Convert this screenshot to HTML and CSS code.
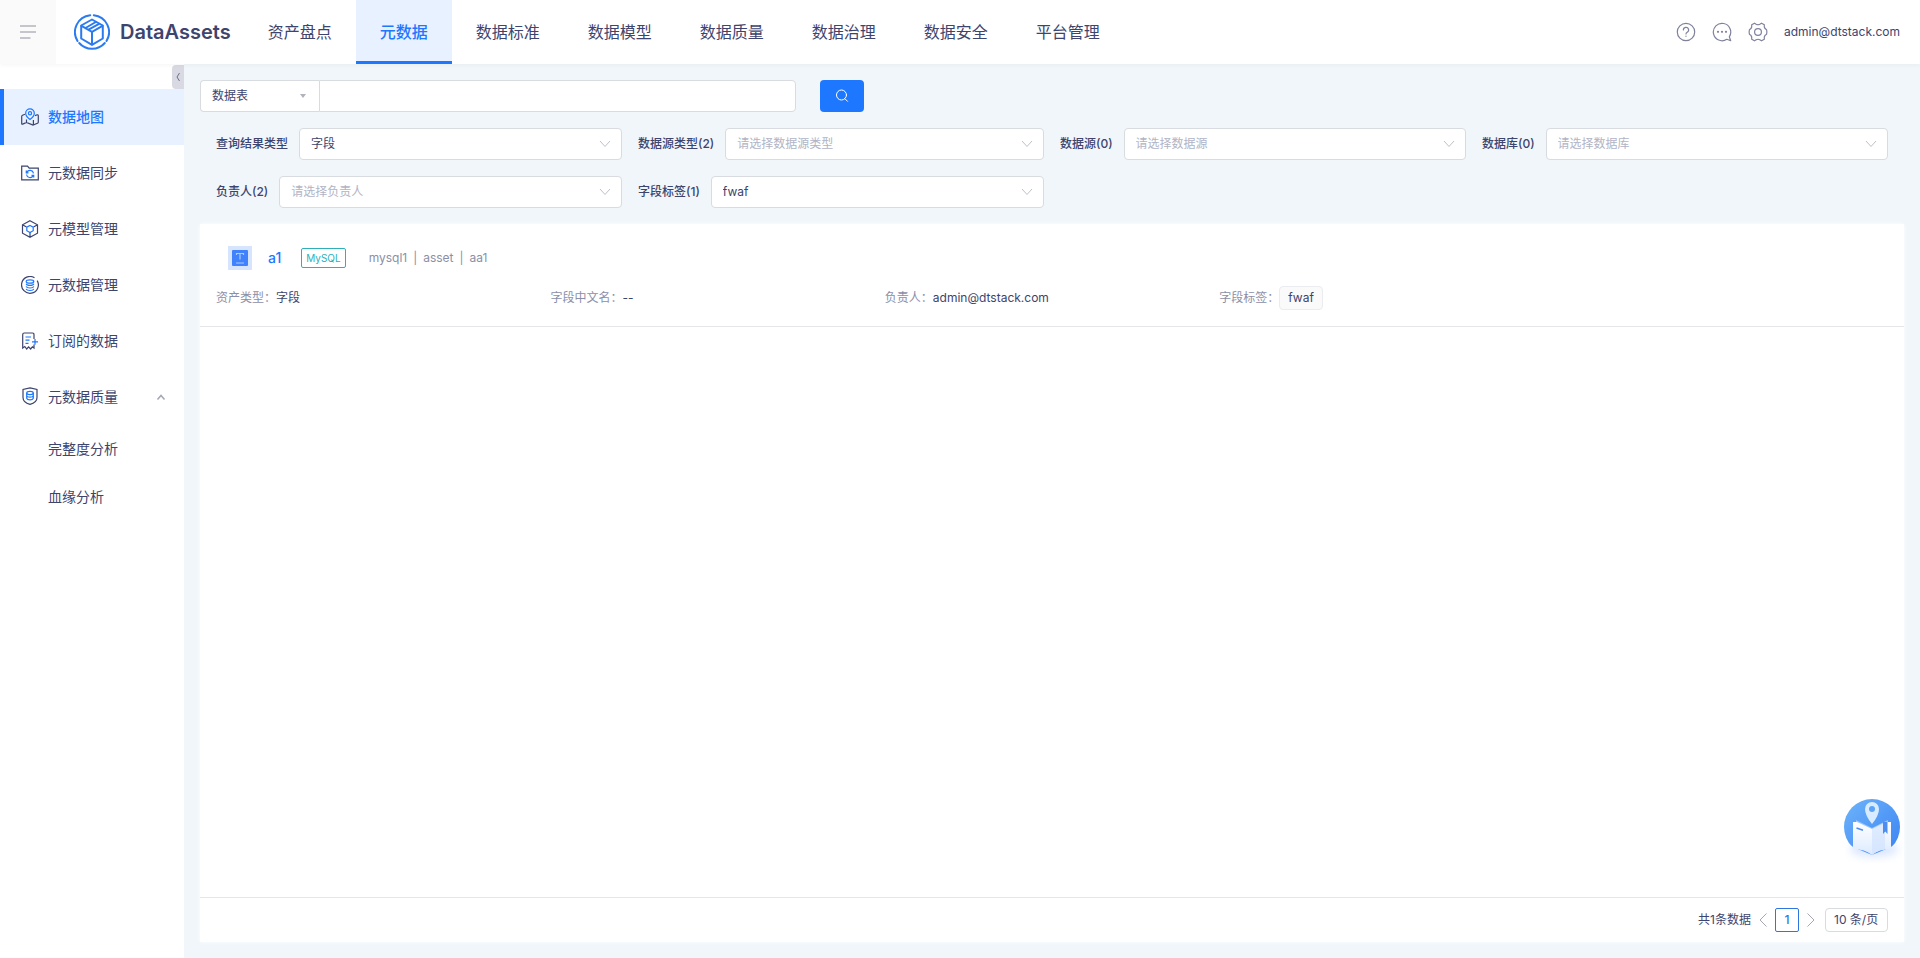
FILE: index.html
```html
<!DOCTYPE html>
<html lang="zh-CN">
<head>
  <meta charset="UTF-8" />
  <meta name="viewport" content="width=device-width, initial-scale=1.0"/>
  <title>DataAssets</title>
  <link rel="stylesheet" href="styles.css">
</head>
<body>

  <header class="header">
    <button class="menu-btn" aria-label="菜单">
      <svg width="16" height="14" viewBox="0 0 16 14" fill="none" stroke="#b4b4bc" stroke-width="1.5"><path d="M0 1h16M0 7h16M0 13h10.500"/></svg>
    </button>
    <a class="brand" href="#">
      <svg width="36" height="36" viewBox="0 0 36 36" fill="none" stroke="#2b7bf0" stroke-width="2" stroke-linecap="round" stroke-linejoin="round">
        <path d="M16.200 1.200A17 17 0 0 0 3.500 27"/>
        <path d="M19.800 1.200A17 17 0 0 1 32.500 27"/>
        <path d="M5.200 29A17 17 0 0 0 30.800 29"/>
        <path d="M18 5.500L28.800 11.500V24.500L18 30.800L7.200 24.500V11.500Z"/>
        <path d="M7.500 11.800L18 17.800L28.500 11.800M18 17.800V30.500M11.500 14L21.800 8M14.600 15.700L25 9.800"/>
      </svg>
      <span>DataAssets</span>
    </a>
    <nav class="nav">
      <a href="#">资产盘点</a>
      <a href="#" class="active">元数据</a>
      <a href="#">数据标准</a>
      <a href="#">数据模型</a>
      <a href="#">数据质量</a>
      <a href="#">数据治理</a>
      <a href="#">数据安全</a>
      <a href="#">平台管理</a>
    </nav>
    <div class="tools">
      <button aria-label="帮助">
        <svg width="20" height="20" viewBox="0 0 20 20" fill="none" stroke="#7f829c" stroke-width="1.200" stroke-linecap="round"><circle cx="10" cy="10" r="8.700"/><path d="M7.400 8A2.600 2.600 0 1 1 11.200 10.200Q10 10.800 10 12"/><path d="M10 14v.3"/></svg>
      </button>
      <button aria-label="消息">
        <svg width="20" height="20" viewBox="0 0 20 20" fill="none" stroke="#7f829c" stroke-width="1.200" stroke-linejoin="round"><path d="M17.300 14.800A8.700 8.700 0 1 0 14.800 17.300L18.700 18.700Z"/><g fill="#7f829c" stroke="none"><circle cx="6" cy="9.800" r="1.100"/><circle cx="10" cy="9.800" r="1.100"/><circle cx="14" cy="9.800" r="1.100"/></g></svg>
      </button>
      <button aria-label="设置">
        <svg width="20" height="20" viewBox="0 0 20 20" fill="none" stroke="#7f829c" stroke-width="1.200" stroke-linejoin="round"><path d="M6.500 1.200L8.200 2.300Q10 3.200 11.800 2.300L13.500 1.200L16.300 2.800V5Q16.700 6.800 18.600 7.800Q19.200 10 18.600 12.200Q16.700 13.200 16.300 15V17.200L13.500 18.800L11.800 17.700Q10 16.800 8.200 17.700L6.500 18.800L3.700 17.200V15Q3.300 13.200 1.400 12.200Q.8 10 1.400 7.800Q3.300 6.800 3.700 5V2.800Z"/><circle cx="10" cy="10" r="3.400"/></svg>
      </button>
      <a class="user" href="#">admin@dtstack.com</a>
    </div>
  </header>

  <div class="layout">
    <aside class="sidebar">
      <button class="collapse" aria-label="收起">
        <svg width="6" height="10" viewBox="0 0 6 10" fill="none" stroke="#6d7088"><path d="M4.500 1L2 5L4.500 9"/></svg>
      </button>
      <nav class="side-menu">
        <a href="#" class="active">
          <svg class="ico" viewBox="0 0 18 18"><path d="M4 6.200L1.500 7.200Q.7 7.600.7 8.500V15.500Q.7 16.600 1.700 16.100L5.500 14.400L12 17L16.500 15.300Q17.300 15 17.300 14V7.700Q17.300 6.500 16.200 6.800L14 7.600M5.500 11.500V14.400M12.400 12V16.800"/><path class="blue" d="M9 11.500Q4.700 8.300 4.700 5.200A4.300 4.300 0 0 1 13.300 5.200Q13.300 8.300 9 11.500Z"/><circle class="blue" cx="9" cy="5.200" r="1.600"/></svg>
          数据地图
        </a>
        <a href="#">
          <svg class="ico" viewBox="0 0 18 18"><path d="M.7 15.800V2.200H6.500L8.200 4.200H17.300V15.800Z"/><path class="blue" d="M5.800 8.200A3.600 3.600 0 0 1 12.500 9.300M5.500 10.500A3.600 3.600 0 0 0 12.100 11.900M5.300 6.500V8.800H7.500M12.700 13.500V11.400H10.500"/></svg>
          元数据同步
        </a>
        <a href="#">
          <svg class="ico" viewBox="0 0 18 18"><path d="M9 .8L16.500 4.800V13.200L9 17.300L1.500 13.200V4.800ZM1.500 4.800L5.500 7M16.500 4.800L12.500 7M9 12V17"/><path class="blue" d="M9 5.500L12.200 7.200V10.700L9 12.500L5.800 10.700V7.200Z"/></svg>
          元模型管理
        </a>
        <a href="#">
          <svg class="ico" viewBox="0 0 18 18"><path d="M13.500 1.800A8.400 8.400 0 1 0 16.200 4.600"/><g class="blue"><ellipse cx="9" cy="5.500" rx="3.800" ry="1.700"/><path d="M5.200 7.700Q5.800 9.400 9 9.400T12.800 7.700M5.200 10.400Q5.800 12 9 12T12.800 10.400M5.200 12.900Q5.800 14.500 9 14.500T12.800 12.900"/></g></svg>
          元数据管理
        </a>
        <a href="#">
          <svg class="ico" viewBox="0 0 18 18"><path d="M13 7V2.700Q13 1 11.500 1H3.200Q1.700 1 1.700 2.700V16L3.800 14.500L5.700 17L7.600 14.800L9.600 17L11.400 14.800L13 16V12.500"/><path class="blue" d="M4.500 5H10M4.500 8.200H8.500M4.500 11.300H7.500M11 9.800H17M14 6.900V12.700"/></svg>
          订阅的数据
        </a>
        <a href="#" class="parent">
          <svg class="ico" viewBox="0 0 18 20"><path d="M9 .8L16 2.500V10.500Q16 15.500 9 17.300Q2 15.500 2 10.500V2.500Z"/><g class="blue"><ellipse cx="9" cy="6" rx="3.300" ry="1.600"/><path d="M5.700 6V11.200Q6.200 12.800 9 12.800T12.300 11.200V6M5.700 8.600Q6.200 10.200 9 10.200T12.300 8.600"/></g></svg>
          元数据质量
          <svg class="arrow" width="10" height="8" viewBox="0 0 10 8" fill="none" stroke="#a5a7b5" stroke-width="1.500"><path d="M1.500 6.500L5 2.500L8.500 6.500"/></svg>
        </a>
        <a href="#" class="sub">完整度分析</a>
        <a href="#" class="sub">血缘分析</a>
      </nav>
    </aside>

    <main class="main">
      <form class="search">
        <div class="select search-type">
          <select aria-label="搜索类型"><option>数据表</option></select>
          <svg width="6" height="4" viewBox="0 0 6 4" fill="#b0b2bc"><path d="M0 0H6L3 4Z"/></svg>
        </div>
        <input type="text" aria-label="关键字">
        <button type="button" aria-label="搜索">
          <svg width="14" height="14" viewBox="0 0 14 14" fill="none" stroke="#fff" stroke-linecap="round"><circle cx="6.500" cy="6" r="5"/><path d="M10 9.800L12.500 12.300"/></svg>
        </button>
      </form>

      <form class="filters">
        <div class="field">
          <label for="resultType">查询结果类型</label>
          <div class="select"><select id="resultType"><option>字段</option></select><svg class="chev" viewBox="0 0 12 8"><path d="M1 1L6 6.500L11 1"/></svg></div>
        </div>
        <div class="field">
          <label for="sourceType">数据源类型(2)</label>
          <div class="select"><select id="sourceType" class="empty"><option>请选择数据源类型</option></select><svg class="chev" viewBox="0 0 12 8"><path d="M1 1L6 6.500L11 1"/></svg></div>
        </div>
        <div class="field">
          <label for="source">数据源(0)</label>
          <div class="select"><select id="source" class="empty"><option>请选择数据源</option></select><svg class="chev" viewBox="0 0 12 8"><path d="M1 1L6 6.500L11 1"/></svg></div>
        </div>
        <div class="field">
          <label for="database">数据库(0)</label>
          <div class="select"><select id="database" class="empty"><option>请选择数据库</option></select><svg class="chev" viewBox="0 0 12 8"><path d="M1 1L6 6.500L11 1"/></svg></div>
        </div>
        <div class="field">
          <label for="owner">负责人(2)</label>
          <div class="select"><select id="owner" class="empty"><option>请选择负责人</option></select><svg class="chev" viewBox="0 0 12 8"><path d="M1 1L6 6.500L11 1"/></svg></div>
        </div>
        <div class="field">
          <label for="tag">字段标签(1)</label>
          <div class="select"><select id="tag"><option>fwaf</option></select><svg class="chev" viewBox="0 0 12 8"><path d="M1 1L6 6.500L11 1"/></svg></div>
        </div>
      </form>

      <section class="results">
        <article class="item">
          <div class="item-head">
            <svg width="24" height="24" viewBox="0 0 24 24"><path fill="#d6e4fd" d="M0 0H24V24H0Z"/><rect x="4" y="4" width="16" height="16" rx="1" fill="#3f82fb"/><path d="M8.500 9V7.500H15.500V9M12 7.500V13.500M8 17H16" fill="none" stroke="#a9c9ff" stroke-width="1.200"/></svg>
            <a class="item-name" href="#">a1</a>
            <span class="db-tag">MySQL</span>
            <div class="path"><span>mysql1</span><span>asset</span><span>aa1</span></div>
          </div>
          <div class="item-info">
            <div>资产类型：<b>字段</b></div>
            <div>字段中文名：<b>--</b></div>
            <div>负责人：<b>admin@dtstack.com</b></div>
            <div>字段标签：<b class="tag">fwaf</b></div>
          </div>
        </article>

        <footer class="pagination">
          <span class="total">共1条数据</span>
          <button aria-label="上一页"><svg width="8" height="14" viewBox="0 0 8 14"><path d="M7.500 .5L1 7L7.500 13.500"/></svg></button>
          <button class="current">1</button>
          <button aria-label="下一页"><svg width="8" height="14" viewBox="0 0 8 14"><path d="M.5 .5L7 7L.5 13.500"/></svg></button>
          <select aria-label="每页条数"><option>10 条/页</option></select>
        </footer>
      </section>
    </main>
  </div>

  <button class="guide" aria-label="使用指引">
    <svg width="72" height="72" viewBox="0 0 72 72">
      <defs>
        <linearGradient id="circle" x1="0" y1="0" x2="1" y2="1"><stop offset="0" stop-color="#6db4fb"/><stop offset="1" stop-color="#3b82f3"/></linearGradient>
        <linearGradient id="page" x1="0" y1="0" x2="0" y2="1"><stop offset="0" stop-color="#fff"/><stop offset="1" stop-color="#dceaff"/></linearGradient>
        <clipPath id="cut"><path d="M0 0H72V44L55 56L36 64L17 56L0 44Z"/></clipPath>
      </defs>
      <ellipse class="glow" cx="38" cy="58" rx="24" ry="8" fill="#dbe7ff"/>
      <g clip-path="url(#cut)"><circle cx="36" cy="36" r="28" fill="url(#circle)"/></g>
      <path d="M20 29L36 37L52 29V56L36 62L20 56Z" fill="#9cc8ff"/>
      <path d="M17 31H21L36 38L51 31H55V58Q43 58 36 64Q29 58 17 58Z" fill="url(#page)"/>
      <path d="M36 38L49 31V58Q41 59 36 64Z" fill="#cfe2ff" opacity=".65"/>
      <path d="M47 31H51.500V43L49.300 40.500L47 43Z" fill="#4d8df0"/>
      <path d="M20.500 37L27 39.200" stroke="#4d8df0" stroke-width="1.600"/>
      <path d="M36 33Q29 24.500 29 18A7 7 0 0 1 43 18Q43 24.500 36 33Z" fill="#d9ecff"/>
      <circle cx="36" cy="18" r="3" fill="#5ba4f8"/>
    </svg>
  </button>

</body>
</html>
```

FILE: styles.css
```css
* {
  box-sizing: border-box;
}

body {
  margin: 0;
  min-height: 100vh;
  display: flex;
  flex-direction: column;
  background-color: #f0f6fa;
  font-family: Inter, "Noto Sans CJK SC", sans-serif;
  font-size: 12px;
  line-height: 20px;
  color: #3d446e;
}

a {
  color: inherit;
  text-decoration: none;
}

button,
input,
select {
  margin: 0;
  padding: 0;
  border: none;
  background: none;
  font: inherit;
  color: inherit;
  outline: none;
}

button {
  display: flex;
  align-items: center;
  justify-content: center;
  cursor: pointer;
}

/* header */

.header {
  position: relative;
  z-index: 1;
  display: flex;
  height: 64px;
  background-color: #fff;
  box-shadow: 0 2px 4px rgba(0, 0, 0, 0.03);
}

.menu-btn {
  width: 56px;
  background-color: #fafafa;
}

.brand {
  display: flex;
  align-items: center;
  gap: 10px;
  padding: 0 13px 0 18px;
  font-size: 20px;
  font-weight: 600;
}

.nav {
  display: flex;
}

.nav a {
  padding: 0 24px;
  font-size: 16px;
  line-height: 64px;
}

.nav .active {
  background-color: #e8f1ff;
  box-shadow: inset 0 -3px #1d78ff;
  color: #1d78ff;
  font-weight: 500;
}

.tools {
  display: flex;
  align-items: center;
  gap: 16px;
  margin-left: auto;
  padding-right: 20px;
}

/* sidebar */

.layout {
  flex: 1;
  display: flex;
}

.sidebar {
  position: relative;
  flex: none;
  width: 184px;
  padding-top: 25px;
  background-color: #fff;
}

.collapse {
  position: absolute;
  top: 1px;
  right: 0;
  width: 12px;
  height: 24px;
  border-radius: 4px 0 0 4px;
  background-color: #d8d9e3;
}

.side-menu a {
  display: flex;
  align-items: center;
  gap: 9px;
  height: 56px;
  padding: 0 18px 0 17px;
  border-left: 4px solid transparent;
  font-size: 14px;
}

.side-menu .active {
  border-color: #1d78ff;
  background-color: #e8f1ff;
  color: #1d78ff;
  font-weight: 500;
}

.side-menu .sub {
  height: 48px;
  padding-left: 44px;
}

.ico {
  width: 18px;
  height: 18px;
  fill: none;
  stroke: #3d446e;
  stroke-width: 1.2;
}

.parent .ico {
  height: 20px;
}

.ico .blue {
  stroke: #1d78ff;
}

.arrow {
  margin-left: auto;
}

/* search and filters */

.main {
  flex: 1;
  display: flex;
  flex-direction: column;
  gap: 16px;
  padding: 16px;
}

.search {
  display: flex;
  height: 32px;
}

.select {
  position: relative;
  flex: 1;
  display: flex;
}

.select select {
  appearance: none;
  width: 100%;
  height: 32px;
  padding: 0 11px;
  border: 1px solid #d8dbdf;
  border-radius: 4px;
  background-color: #fff;
}

.select .empty {
  color: #b1b4c5;
}

.select svg {
  position: absolute;
  top: 14px;
  right: 13px;
  pointer-events: none;
}

.select .chev {
  top: 12px;
  right: 11px;
  width: 12px;
  height: 8px;
  fill: none;
  stroke: #bfc1c9;
}

.search-type {
  flex: none;
  width: 119px;
}

.search-type select {
  border-right: none;
  border-radius: 4px 0 0 4px;
}

.search input {
  width: 477px;
  padding: 0 11px;
  border: 1px solid #d8dbdf;
  border-radius: 0 4px 4px 0;
  background-color: #fff;
}

.search button {
  width: 44px;
  margin-left: 24px;
  border-radius: 4px;
  background-color: #1d78ff;
}

.filters {
  display: grid;
  grid-template-columns: repeat(4, 1fr);
  gap: 16px;
  padding: 0 16px;
}

.field {
  display: flex;
  align-items: center;
  gap: 11px;
}

.field label {
  font-weight: 500;
}

/* results */

.results {
  flex: 1;
  display: flex;
  flex-direction: column;
  background-color: #fff;
  box-shadow: 0 0 4px #fff;
}

.item {
  padding: 22px 16px 16px;
  border-bottom: 1px solid #e5e6ea;
}

.item-head {
  display: flex;
  align-items: center;
  height: 24px;
  padding-left: 12px;
}

.item-name {
  margin: 0 20px 0 16px;
  color: #1d78ff;
  font-size: 14px;
  font-weight: 500;
}

.db-tag {
  padding: 0 4px;
  border: 1px solid #2fafb9;
  border-radius: 2px;
  color: #2fafb9;
  font-size: 10px;
  line-height: 18px;
}

.path {
  display: flex;
  margin-left: 23px;
  color: #8b8fa8;
}

.path span + span::before {
  content: "|";
  margin: 0 6px;
}

.item-info {
  display: grid;
  grid-template-columns: repeat(5, 1fr);
  align-items: center;
  margin-top: 16px;
  color: #8b8fa8;
}

.item-info b {
  color: #3d446e;
  font-weight: 400;
}

.item-info .tag {
  display: inline-block;
  padding: 1px 8px;
  border: 1px solid #ebecf0;
  border-radius: 4px;
  background-color: #fafafa;
}

.pagination {
  display: flex;
  align-items: center;
  justify-content: flex-end;
  gap: 8px;
  height: 45px;
  margin-top: auto;
  padding: 0 16px;
  border-top: 1px solid #e5e6ea;
}

.pagination svg {
  fill: none;
  stroke: #a5a7b5;
}

.pagination .current {
  width: 24px;
  height: 24px;
  border: 1px solid #2f76e0;
  border-radius: 2px;
  color: #2f76e0;
  font-weight: 500;
}

.pagination select {
  appearance: none;
  height: 24px;
  margin-left: 2px;
  padding: 0 8px;
  border: 1px solid #d8dbdf;
  border-radius: 4px;
}

/* floating guide */

.guide {
  position: fixed;
  right: 12px;
  bottom: 95px;
}

.glow {
  filter: blur(4px);
}
```
